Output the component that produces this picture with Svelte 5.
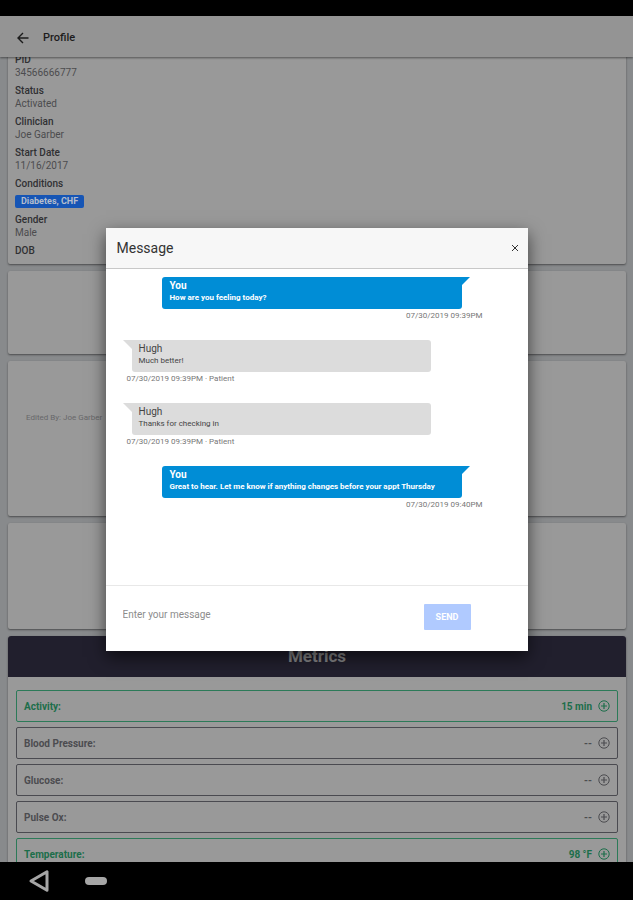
<script>
  const details = [
    { label: 'PID', value: '34566666777' },
    { label: 'Status', value: 'Activated' },
    { label: 'Clinician', value: 'Joe Garber' },
    { label: 'Start Date', value: '11/16/2017' },
    { label: 'Conditions', badge: 'Diabetes, CHF' },
    { label: 'Gender', value: 'Male' },
    { label: 'DOB' }
  ];

  const metrics = [
    { name: 'Activity', value: '15 min', active: true },
    { name: 'Blood Pressure', value: '--', active: false },
    { name: 'Glucose', value: '--', active: false },
    { name: 'Pulse Ox', value: '--', active: false },
    { name: 'Temperature', value: '98 °F', active: true }
  ];

  const messages = [
    { from: 'You', text: 'How are you feeling today?', meta: '07/30/2019 09:39PM', mine: true },
    { from: 'Hugh', text: 'Much better!', meta: '07/30/2019 09:39PM · Patient', mine: false },
    { from: 'Hugh', text: 'Thanks for checking in', meta: '07/30/2019 09:39PM · Patient', mine: false },
    {
      from: 'You',
      text: 'Great to hear. Let me know if anything changes before your appt Thursday',
      meta: '07/30/2019 09:40PM',
      mine: true
    }
  ];

  let draft = $state('');
</script>

<div class="device">
  <div class="statusbar"></div>

  <div class="screen">
    <header class="appbar">
      <button class="back" aria-label="Back">
        <svg viewBox="0 0 12 12" width="12" height="12">
          <path d="M11.5 6H1M6 1L1 6l5 5" fill="none" stroke="currentColor" stroke-width="1.4" />
        </svg>
      </button>
      <h1>Profile</h1>
    </header>

    <main>
      <section class="card profile">
        <dl>
          {#each details as d}
            <div>
              <dt>{d.label}</dt>
              {#if d.badge}
                <dd class="badge">{d.badge}</dd>
              {:else if d.value}
                <dd>{d.value}</dd>
              {/if}
            </div>
          {/each}
        </dl>
      </section>

      <section class="card small"></section>
      <section class="card notes"><p>Edited By: Joe Garber</p></section>
      <section class="card medium"></section>

      <section class="card metrics">
        <h2>Metrics</h2>
        <ul>
          {#each metrics as m}
            <li class:active={m.active}>
              <span class="name">{m.name}:</span>
              <span>{m.value}</span>
              <button aria-label="Add {m.name}">
                <svg viewBox="0 0 12 12" width="12" height="12">
                  <circle cx="6" cy="6" r="5.2" fill="none" stroke="currentColor" stroke-width="1" />
                  <path d="M6 3v6M3 6h6" stroke="currentColor" stroke-width="1.2" />
                </svg>
              </button>
            </li>
          {/each}
        </ul>
      </section>
    </main>

    <div class="overlay">
      <div class="modal" role="dialog" aria-labelledby="modal-title">
        <div class="modal-head">
          <h2 id="modal-title">Message</h2>
          <button aria-label="Close">
            <svg viewBox="0 0 8 8" width="8" height="8">
              <path d="M1 1l6 6M7 1L1 7" stroke="currentColor" stroke-width="1" />
            </svg>
          </button>
        </div>

        <div class="thread">
          {#each messages as m}
            <article class:mine={m.mine}>
              <div class="bubble">
                <strong>{m.from}</strong>
                <p>{m.text}</p>
              </div>
              <small>{m.meta}</small>
            </article>
          {/each}
        </div>

        <form onsubmit={(e) => e.preventDefault()}>
          <input type="text" aria-label="Message" placeholder="Enter your message" bind:value={draft} />
          <button type="submit" disabled={!draft}>SEND</button>
        </form>
      </div>
    </div>
  </div>

  <nav>
    <button aria-label="System back">
      <svg viewBox="0 0 22 24" width="22" height="24">
        <path d="M19 2.8v18.4L3 12z" fill="none" stroke="currentColor" stroke-width="3" stroke-linejoin="round" />
      </svg>
    </button>
    <button class="home" aria-label="Home"></button>
  </nav>
</div>

<style>
  :global(body) {
    margin: 0;
    background: #000;
  }
  .device {
    display: flex;
    flex-direction: column;
    height: 100vh;
    overflow: hidden;
    background: #000;
    font-family: Roboto, 'Liberation Sans', sans-serif;
    font-size: 10px;
    color: #303033;
  }
  h1, h2, p, dl, dd, ul {
    margin: 0;
    padding: 0;
  }
  button {
    padding: 0;
    border: 0;
    background: none;
    color: inherit;
    font: inherit;
  }
  svg {
    display: block;
  }
  .statusbar {
    flex: none;
    height: 16px;
  }
  .screen {
    position: relative;
    flex: 1;
    min-height: 0;
    display: flex;
    flex-direction: column;
    background: #888a8c;
  }
  .appbar {
    flex: none;
    display: flex;
    align-items: center;
    gap: 14px;
    height: 41px;
    padding: 2px 17px 0;
    box-sizing: border-box;
    background: #949494;
    box-shadow: 0 1px 2px rgba(0, 0, 0, 0.45);
    position: relative;
    color: #1c1c1c;
  }
  .appbar h1 {
    font-size: 11px;
    line-height: 16px;
    font-weight: 500;
  }
  main {
    flex: 1;
    min-height: 0;
    overflow: hidden;
    display: flex;
    flex-direction: column;
    gap: 7px;
    padding: 0 7px 0 8px;
  }
  .card {
    flex: none;
    box-sizing: border-box;
    background: #999;
    border-radius: 2px;
    box-shadow: 0 1px 2px rgba(0, 0, 0, 0.45);
  }
  .profile {
    margin-top: -11px;
    padding: 8px 7px 7px;
  }
  dl {
    display: flex;
    flex-direction: column;
    gap: 6px;
  }
  dt {
    line-height: 12px;
    font-weight: 500;
  }
  dd {
    line-height: 13px;
    color: #4c4c4e;
  }
  dd.badge {
    width: fit-content;
    margin-top: 5px;
    padding: 0 6px;
    border-radius: 2px;
    background: #1655b5;
    color: #b4bdcc;
    font-size: 9px;
    font-weight: 700;
  }
  .small {
    height: 83px;
  }
  .notes {
    height: 155px;
    padding: 52px 18px;
    color: #68686a;
    font-size: 8px;
    line-height: 10px;
  }
  .medium {
    height: 106px;
  }
  .metrics h2 {
    border-radius: 3px 3px 0 0;
    background: #211f2d;
    color: #858587;
    font-size: 17px;
    font-weight: 700;
    line-height: 41px;
    text-align: center;
  }
  ul {
    display: flex;
    flex-direction: column;
    gap: 5px;
    padding: 13px 8px;
    list-style: none;
  }
  li {
    display: flex;
    align-items: center;
    gap: 6px;
    box-sizing: border-box;
    height: 32px;
    padding: 0 7px;
    border: 1px solid #4a4a50;
    border-radius: 2px;
    color: #4c4c50;
    font-weight: 700;
  }
  li.active {
    border-color: #2c7a58;
    color: #1c6e4a;
  }
  .name {
    flex: 1;
  }
  .overlay {
    position: absolute;
    inset: 0;
    display: flex;
    align-items: center;
    justify-content: center;
  }
  .modal {
    display: flex;
    flex-direction: column;
    width: calc(100% * 2 / 3);
    height: 50%;
    background: #fff;
    box-shadow: 0 6px 16px rgba(0, 0, 0, 0.6);
  }
  .modal-head {
    flex: none;
    display: flex;
    align-items: center;
    justify-content: space-between;
    height: 40px;
    padding: 0 9px 0 11px;
    background: #f7f7f7;
    border-bottom: 1px solid #c8c8c8;
    color: #333;
  }
  .modal-head h2 {
    font-size: 14px;
    line-height: 20px;
    font-weight: 400;
  }
  .thread {
    flex: 1;
    min-height: 0;
    overflow: hidden;
    display: flex;
    flex-direction: column;
    gap: 18px;
    padding: 8px 45px 8px 21px;
  }
  article {
    display: flex;
    flex-direction: column;
    color: #444;
  }
  .bubble {
    position: relative;
    box-sizing: border-box;
    width: 84%;
    min-height: 32px;
    margin-left: 5px;
    padding: 2px 7px;
    border-radius: 0 3px 3px 3px;
    background: #dcdcdc;
  }
  .bubble::before {
    content: '';
    position: absolute;
    top: 0;
    right: calc(100% - 1px);
    width: 10px;
    height: 10px;
    background: inherit;
    clip-path: polygon(0 0, 100% 0, 100% 100%);
  }
  .bubble strong {
    display: block;
    font-size: 10px;
    line-height: 13px;
    font-weight: 400;
  }
  .bubble p {
    font-size: 8px;
    line-height: 12px;
  }
  small {
    font-size: 8px;
    line-height: 13px;
    color: #777;
  }
  .mine .bubble {
    align-self: flex-end;
    margin-right: 21px;
    border-radius: 3px 0 3px 3px;
    background: #008dd6;
    color: #fff;
  }
  .mine .bubble::before {
    right: auto;
    left: calc(100% - 1px);
    clip-path: polygon(0 0, 100% 0, 0 100%);
  }
  .mine strong, .mine p {
    font-weight: 700;
  }
  .mine small {
    text-align: right;
  }
  form {
    flex: none;
    display: flex;
    align-items: center;
    gap: 16px;
    height: 66px;
    box-sizing: border-box;
    padding: 0 57px 2px 17px;
    border-top: 1px solid #e8e8e8;
  }
  input {
    flex: 1;
    min-width: 0;
    height: 26px;
    padding: 0 0 6px;
    box-sizing: border-box;
    border: 0;
    background: none;
    color: #444;
    font: inherit;
  }
  input::placeholder {
    color: #8c8c8c;
    opacity: 1;
  }
  form button {
    width: 47px;
    height: 26px;
    border-radius: 1px;
    background: #b0caff;
    color: #fff;
    font-size: 9px;
    font-weight: 700;
  }
  nav {
    flex: none;
    display: flex;
    align-items: center;
    gap: 35px;
    height: 38px;
    padding: 0 28px;
    color: #a6a6a6;
  }
  .home {
    width: 22px;
    height: 8px;
    border-radius: 4px;
    background: #a6a6a6;
  }
</style>
